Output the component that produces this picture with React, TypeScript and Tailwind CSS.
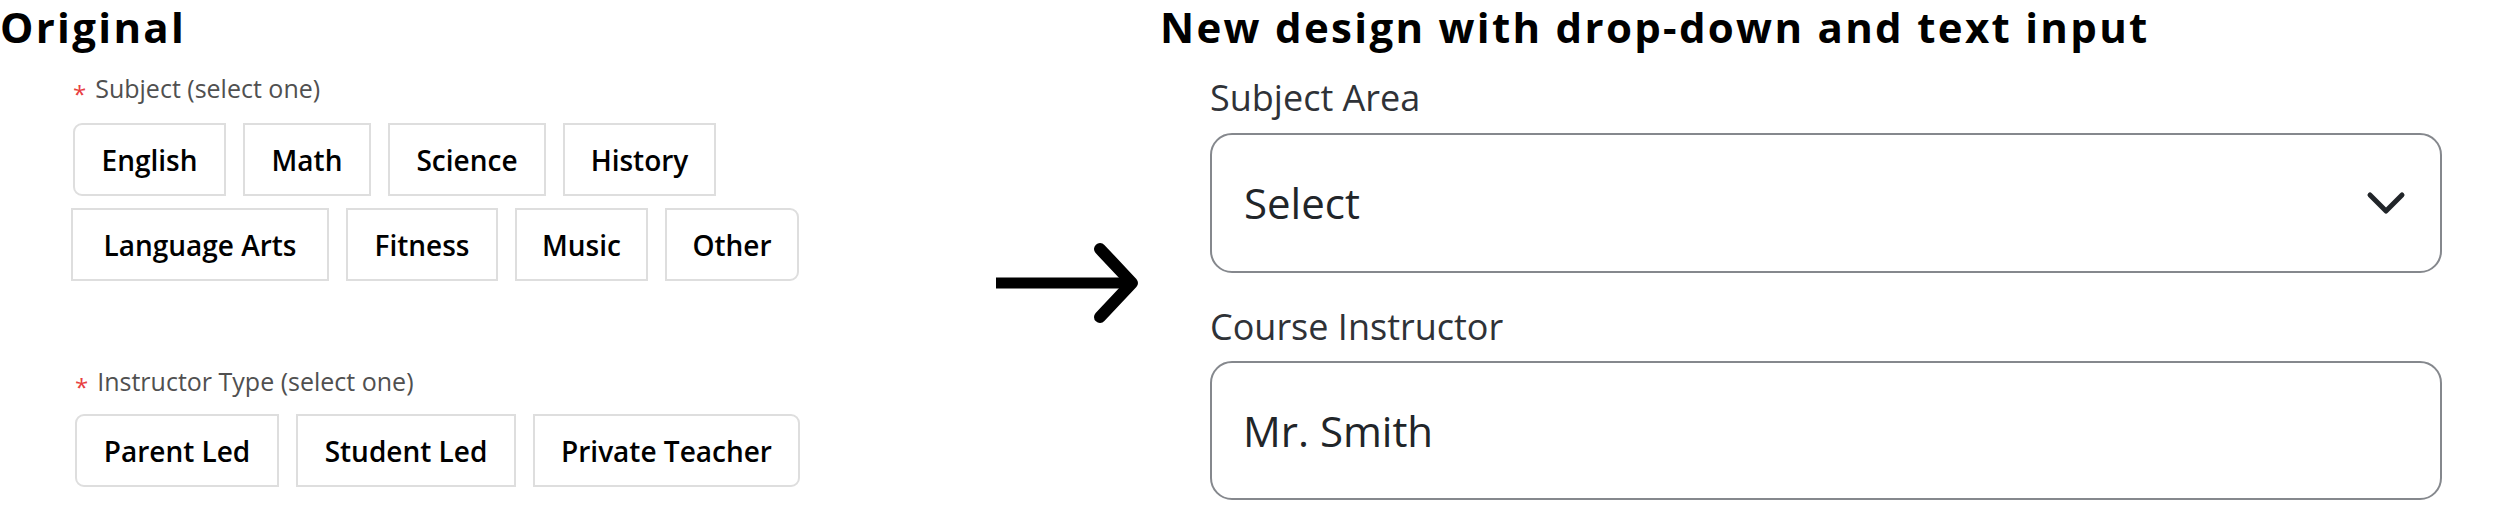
import React from 'react';

type Opt = { label: string; w: string };

const subjectRow1: Opt[] = [
  { label: 'English', w: 'w-[153px]' },
  { label: 'Math', w: 'w-[128px]' },
  { label: 'Science', w: 'w-[158px]' },
  { label: 'History', w: 'w-[153px]' },
];

const subjectRow2: Opt[] = [
  { label: 'Language Arts', w: 'w-[258px]' },
  { label: 'Fitness', w: 'w-[152px]' },
  { label: 'Music', w: 'w-[133px]' },
  { label: 'Other', w: 'w-[134px]' },
];

const instructorRow: Opt[] = [
  { label: 'Parent Led', w: 'w-[204px]' },
  { label: 'Student Led', w: 'w-[220px]' },
  { label: 'Private Teacher', w: 'w-[267px]' },
];

function OptionButton({
  opt,
  first,
  last,
}: {
  opt: Opt;
  first?: boolean;
  last?: boolean;
}) {
  return (
    <button
      type="button"
      className={`${opt.w} flex h-[73px] items-center justify-center border-2 border-[#dedede] bg-white text-[28px] leading-none font-semibold text-black ${
        first ? 'rounded-l-[9px]' : ''
      } ${last ? 'rounded-r-[9px]' : ''}`}
    >
      {opt.label}
    </button>
  );
}

function RequiredLabel({ text }: { text: string }) {
  return (
    <div className="flex h-[25px] items-start text-[25px] leading-none text-[#505050]">
      <span className="mr-[9px] translate-y-[6px] text-[24px] text-[#e8403f]">*</span>
      <span>{text}</span>
    </div>
  );
}

function Arrow() {
  return (
    <svg width="160" height="100" viewBox="0 0 160 100" fill="none">
      <path d="M6 50 H140" stroke="#000" strokeWidth="11" />
      <path
        d="M110 16 L142 50 L110 84"
        stroke="#000"
        strokeWidth="12"
        strokeLinecap="round"
        strokeLinejoin="round"
      />
    </svg>
  );
}

export default function App() {
  return (
    <div
      className="flex h-[515px] w-[2500px] bg-white"
      style={{ fontFamily: '"Open Sans", "Liberation Sans", sans-serif' }}
    >
      {/* original */}
      <div className="w-[990px] shrink-0">
        <h1 className="mt-[6px] h-[42px] text-[42px] leading-none font-bold tracking-[0.055em] text-black">
          Original
        </h1>

        <div className="mt-[28px] ml-[73px]">
          <RequiredLabel text="Subject (select one)" />
        </div>
        <div className="mt-[22px] ml-[73px] flex gap-[17px]">
          {subjectRow1.map((o, i) => (
            <OptionButton key={o.label} opt={o} first={i === 0} />
          ))}
        </div>
        <div className="mt-[12px] ml-[71px] flex gap-[17px]">
          {subjectRow2.map((o, i) => (
            <OptionButton key={o.label} opt={o} last={i === subjectRow2.length - 1} />
          ))}
        </div>

        <div className="mt-[88px] ml-[75px]">
          <RequiredLabel text="Instructor Type (select one)" />
        </div>
        <div className="mt-[20px] ml-[75px] flex gap-[17px]">
          {instructorRow.map((o, i) => (
            <OptionButton
              key={o.label}
              opt={o}
              first={i === 0}
              last={i === instructorRow.length - 1}
            />
          ))}
        </div>
      </div>

      {/* arrow */}
      <div className="w-[160px] shrink-0 pt-[233px]">
        <Arrow />
      </div>

      {/* new design */}
      <div className="flex-1 pl-[10px]">
        <h1 className="mt-[6px] h-[42px] text-[42px] leading-none font-bold tracking-[0.055em] text-black">
          New design with drop-down and text input
        </h1>

        <div className="pl-[50px]">
          <label className="mt-[32px] block h-[36px] text-[36px] leading-none text-[#2f3237]">
            Subject Area
          </label>
          <div className="mt-[17px] flex h-[140px] w-[1232px] items-center justify-between rounded-[22px] border-2 border-[#85888d] pr-[34px] pl-[32px]">
            <span className="text-[42px] leading-none text-[#212529]">Select</span>
            <svg width="40" height="26" viewBox="0 0 40 26" fill="none">
              <path
                d="M4 5 L20 21 L36 5"
                stroke="#212529"
                strokeWidth="5"
                strokeLinecap="round"
                strokeLinejoin="round"
              />
            </svg>
          </div>

          <label className="mt-[36px] block h-[36px] text-[36px] leading-none text-[#2f3237]">
            Course Instructor
          </label>
          <div className="mt-[16px] flex h-[139px] w-[1232px] items-center rounded-[22px] border-2 border-[#85888d] pl-[31px]">
            <span className="text-[42px] leading-none text-[#212529]">Mr. Smith</span>
          </div>
        </div>
      </div>
    </div>
  );
}
